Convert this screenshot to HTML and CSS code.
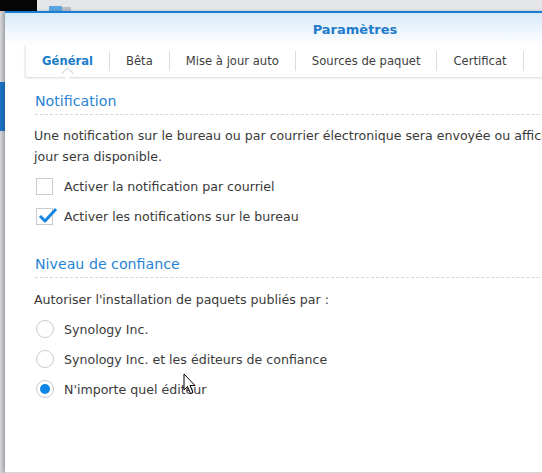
FILE: index.html
```html
<!DOCTYPE html>
<html>
  <head>
    <title>Paramètres</title>
    <link rel="stylesheet" href="styles.css">
  </head>
  <body>
    <div id="topbar">
      <div class="top-black"></div>
      <div class="top-tab"></div>
      <div class="top-tab-grip"></div>
    </div>
    <div id="desktop">
      <div id="side-strip">
        <div class="side-blue"></div>
      </div>
      <div id="window">
        <div class="window-header">Paramètres</div>
        <div class="tabs">
          <div class="tab active">Général</div>
          <div class="tab">Bêta</div>
          <div class="tab">Mise à jour auto</div>
          <div class="tab">Sources de paquet</div>
          <div class="tab">Certificat</div>
        </div>
        <div class="content">
          <div class="section-title">Notification</div>
          <p class="desc">Une notification sur le bureau ou par courrier électronique sera envoyée ou affichée lorsqu'une nouvelle version ou mise à<br>jour sera disponible.</p>
          <div class="option">
            <span class="checkbox"></span>
            <span>Activer la notification par courriel</span>
          </div>
          <div class="option">
            <span class="checkbox checked">
              <svg width="20" height="16" viewBox="0 0 20 16">
                <path d="M2 9 L7 14 L18 2" fill="none" stroke="#1a86e0" stroke-width="3" stroke-linejoin="round"/>
              </svg>
            </span>
            <span>Activer les notifications sur le bureau</span>
          </div>

          <div class="section-title second">Niveau de confiance</div>
          <p class="desc">Autoriser l'installation de paquets publiés par :</p>
          <div class="option">
            <span class="radio"></span>
            <span>Synology Inc.</span>
          </div>
          <div class="option">
            <span class="radio"></span>
            <span>Synology Inc. et les éditeurs de confiance</span>
          </div>
          <div class="option">
            <span class="radio selected"></span>
            <span>N'importe quel éditeur</span>
          </div>
        </div>
      </div>
    </div>
    <svg class="cursor" width="14" height="22" viewBox="0 0 14 22">
      <path d="M1 1 L1 17 L4.5 13.5 L7.5 20.5 L10 19.5 L7 12.5 L12 12.5 Z" fill="#fff" stroke="#000" stroke-width="1" stroke-linejoin="miter"/>
    </svg>
  </body>
</html>
```

FILE: styles.css
```css
* {
  margin: 0;
  padding: 0;
  box-sizing: border-box;
}

body {
  font-family: "DejaVu Sans", sans-serif;
  font-size: 12.6px;
  color: #3a3a3a;
  background: #e6e8eb;
  width: 542px;
  height: 473px;
  overflow: hidden;
  position: relative;
}

#topbar {
  height: 11px;
  display: flex;
  align-items: flex-end;
  background: #e4e6e9;
}

.top-black {
  width: 37px;
  height: 11px;
  background: #050505;
  align-self: flex-start;
}

.top-tab {
  width: 13px;
  height: 5px;
  margin-left: 12px;
  background: #5ba6e3;
}

.top-tab-grip {
  width: 9px;
  height: 4px;
  background: #b9bec4;
}

#desktop {
  display: flex;
  height: 462px;
}

#side-strip {
  width: 6px;
  background: linear-gradient(to right, #d4d6d9, #c2c4c7);
  padding-top: 71px;
}

.side-blue {
  height: 49px;
  width: 5px;
  background: #1e74c4;
}

#window {
  width: 700px;
  flex: none;
  height: 461px;
  background: #fff;
  border-top: 2px solid #1a7dd4;
  box-shadow: -2px 0 3px rgba(0, 0, 0, 0.18);
  display: flex;
  flex-direction: column;
}

.window-header {
  height: 32px;
  padding-top: 9px;
  text-align: center;
  font-weight: bold;
  font-size: 13px;
  color: #1f7ccb;
  background: linear-gradient(to bottom, #d8eaf9, #ffffff);
}

.tabs {
  margin-left: 20px;
  height: 32px;
  display: flex;
  align-items: center;
  border-left: 1px solid #eaeaea;
  box-shadow: 0 1px 2px rgba(0, 0, 0, 0.16);
}

.tab {
  position: relative;
  padding: 0 16px;
  height: 20px;
  line-height: 20px;
  font-size: 11.6px;
  color: #3e3e3e;
  border-right: 1px solid #dcdcdc;
}

.tab.active {
  font-weight: bold;
  color: #1b7cc9;
}

/* petit repère sous l'onglet actif */
.tab.active::after {
  content: "";
  position: absolute;
  left: 50%;
  bottom: -7px;
  margin-left: -5px;
  width: 8px;
  height: 8px;
  background: #fff;
  border-left: 1px solid #d4d4d4;
  border-top: 1px solid #d4d4d4;
  transform: rotate(45deg);
}

.content {
  padding: 14px 0 0 29px;
}

.section-title {
  font-size: 14.2px;
  line-height: 20px;
  color: #2784d2;
  padding-bottom: 3px;
  margin-left: 1px;
  border-bottom: 1px dashed #d3d6da;
}

.section-title.second {
  margin-top: 23px;
}

.desc {
  margin-top: 10px;
  line-height: 21px;
  white-space: nowrap;
  margin-bottom: 4px;
}

.section-title.second + .desc {
  margin-top: 11px;
}

.option {
  height: 30px;
  display: flex;
  align-items: center;
}

.checkbox {
  position: relative;
  width: 17px;
  height: 17px;
  margin: 0 11px 0 2px;
  border: 1px solid #c9cbce;
  background: #fff;
}

.checkbox svg {
  position: absolute;
  left: 1px;
  top: -2px;
}

.radio {
  width: 18px;
  height: 18px;
  margin: 0 10px 0 2px;
  border: 1px solid #c9cbce;
  border-radius: 50%;
  background: #fff;
  display: flex;
  align-items: center;
  justify-content: center;
}

.radio.selected::after {
  content: "";
  width: 10px;
  height: 10px;
  border-radius: 50%;
  background: #0d86e8;
}

.cursor {
  position: absolute;
  left: 183px;
  top: 373px;
}
```
